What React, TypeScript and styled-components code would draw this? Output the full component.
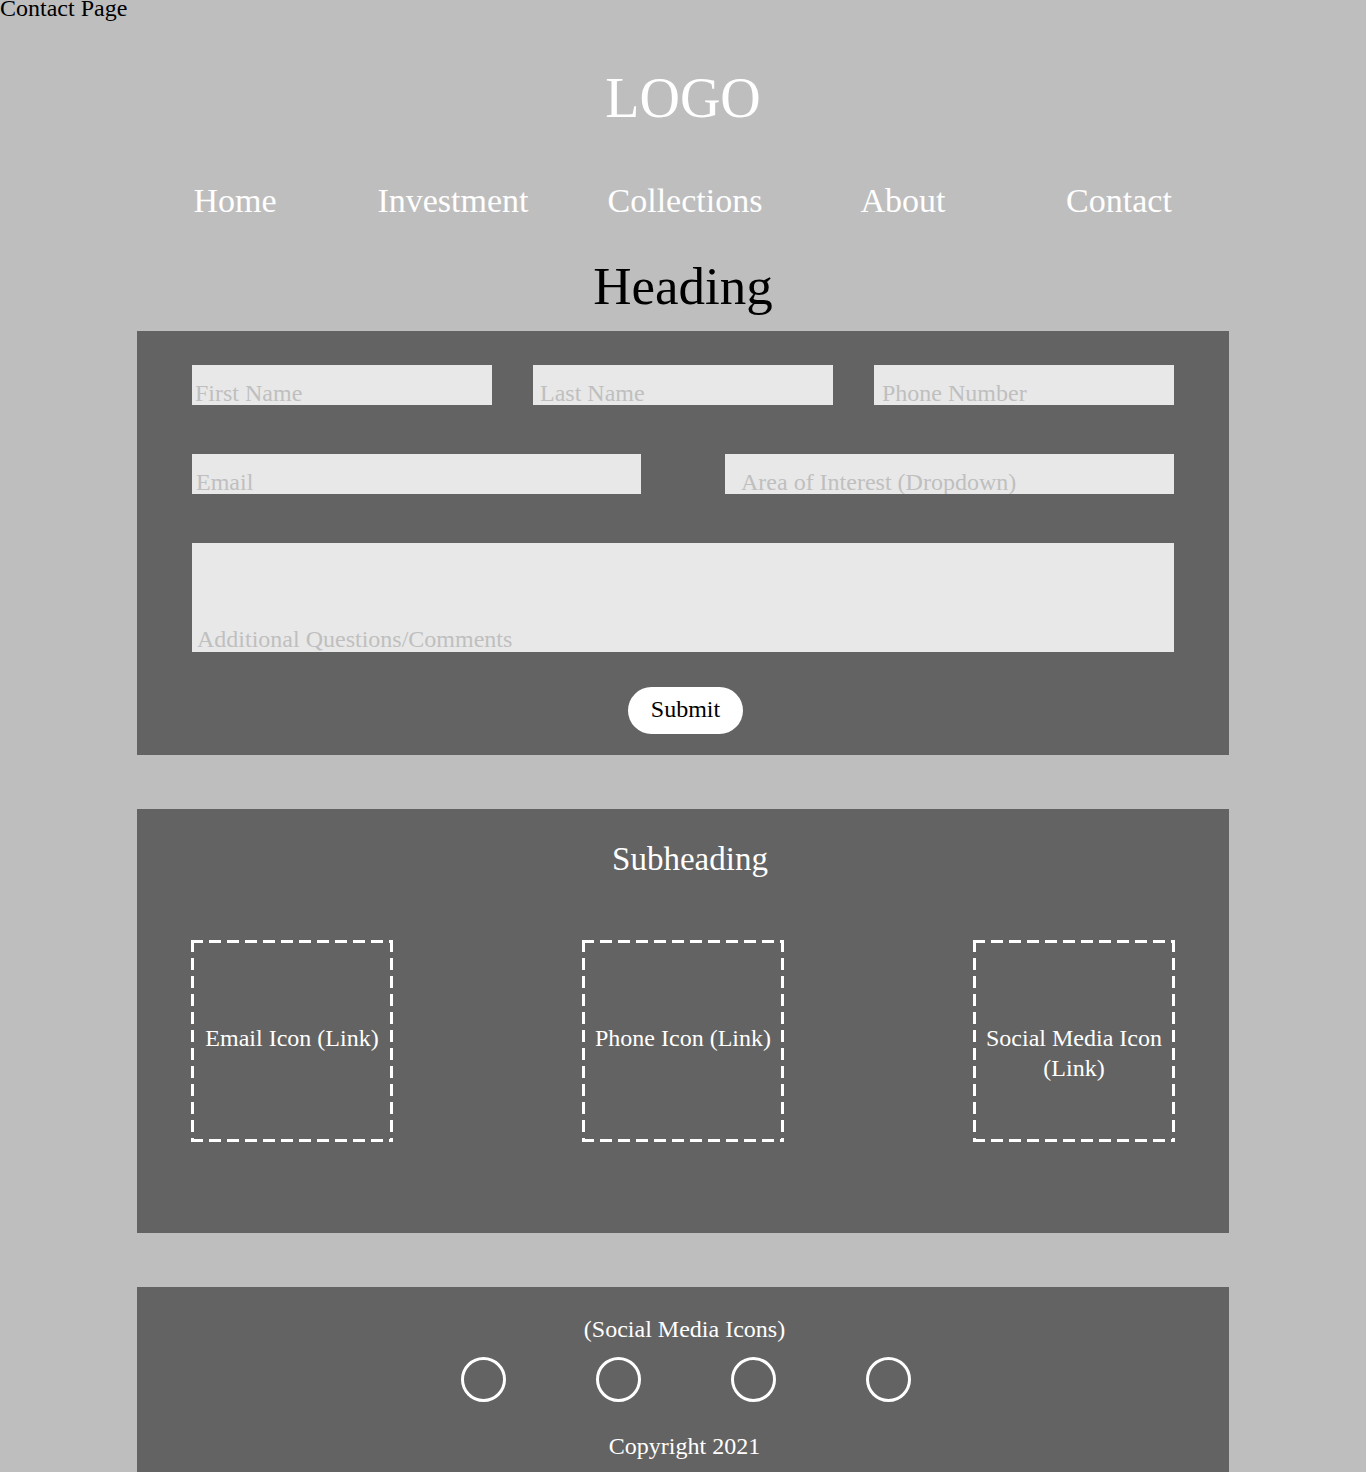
import React from 'react';
import styled, { createGlobalStyle } from 'styled-components';

const serif = `"Liberation Serif", "Times New Roman", serif`;
const panelGrey = '#636363';
const fieldGrey = '#e8e8e8';
const placeholderGrey = '#bfbfbf';

const GlobalStyle = createGlobalStyle`
    html, body {
        margin: 0;
        padding: 0;
        background: #bebebe;
    }
    body {
        font-family: ${serif};
        color: #000;
    }
    * {
        box-sizing: border-box;
    }
`;

const Page = styled.div`
    width: 100%;
    background: #bebebe;
`;

const PageTitle = styled.div`
    font-size: 24px;
    line-height: 16px;
    height: 16px;
    color: #000;
`;

const Container = styled.div`
    width: 1092px;
    margin: 0 auto;
`;

const Logo = styled.div`
    margin-top: 54px;
    font-size: 56px;
    line-height: 56px;
    color: #fff;
    text-align: center;
`;

const Nav = styled.nav`
    margin-top: 55px;
    display: grid;
    grid-template-columns: 196px 240px 224px 212px 220px;
`;

const NavLink = styled.a`
    font-size: 34px;
    line-height: 40px;
    color: #fff;
    text-align: center;
    text-decoration: none;
    cursor: pointer;
`;

const Heading = styled.h1`
    margin: 35px 0 0;
    font-size: 53px;
    line-height: 60px;
    font-weight: normal;
    text-align: center;
    color: #000;
`;

const Panel = styled.section`
    background: ${panelGrey};
    margin-top: ${(props: { mt: string }) => props.mt};
`;

const Form = styled.form`
    padding: 34px 55px 21px;
    display: flex;
    flex-direction: column;
`;

const FieldRow = styled.div`
    display: grid;
    grid-template-columns: ${(props: { cols: number; gap: string }) =>
        `repeat(${props.cols}, 1fr)`};
    column-gap: ${(props: { cols: number; gap: string }) => props.gap};
    margin-bottom: 49px;
`;

const Field = styled.input`
    height: 40px;
    width: 100%;
    border: none;
    outline: none;
    background: ${fieldGrey};
    font-family: ${serif};
    font-size: 24px;
    padding: 16px 0 0 ${(props: { indent?: string }) => props.indent || '4px'};
    color: #333;
    &::placeholder {
        color: ${placeholderGrey};
    }
`;

const Comments = styled.textarea`
    height: 109px;
    width: 100%;
    border: none;
    outline: none;
    resize: none;
    background: ${fieldGrey};
    font-family: ${serif};
    font-size: 24px;
    padding: 83px 0 0 5px;
    color: #333;
    overflow: hidden;
    &::placeholder {
        color: ${placeholderGrey};
    }
`;

const SubmitButton = styled.button`
    align-self: center;
    margin: 35px 0 0 5px;
    width: 115px;
    height: 47px;
    border: none;
    border-radius: 24px;
    background: #fff;
    color: #000;
    font-family: ${serif};
    font-size: 24px;
    padding: 0 0 2px;
    cursor: pointer;
`;

const Subheading = styled.h2`
    margin: 0;
    padding: 30px 0 0 14px;
    font-size: 33px;
    line-height: 40px;
    font-weight: normal;
    color: #fff;
    text-align: center;
`;

const LinkRow = styled.div`
    display: flex;
    justify-content: space-between;
    padding: 61px 54px 91px;
`;

const dashes = (angle: string) =>
    `repeating-linear-gradient(${angle}, #fff 0 12px, transparent 12px 18px)`;

const LinkBox = styled.a`
    width: 202px;
    height: 202px;
    padding: 83px 8px 0;
    background:
        ${dashes('90deg')} top left / 100% 3px no-repeat,
        ${dashes('90deg')} bottom left / 100% 3px no-repeat,
        ${dashes('180deg')} top left / 3px 100% no-repeat,
        ${dashes('180deg')} top right / 3px 100% no-repeat;
    color: #fff;
    font-size: 24px;
    line-height: 30px;
    text-align: center;
    text-decoration: none;
    cursor: pointer;
`;

const Footer = styled.footer`
    background: ${panelGrey};
    margin-top: 54px;
    padding: 28px 0 16px;
    display: flex;
    flex-direction: column;
    align-items: center;
    color: #fff;
`;

const FooterText = styled.div`
    font-size: 24px;
    line-height: 28px;
    margin-top: ${(props: { mt?: string }) => props.mt || '0'};
    padding-left: 3px;
`;

const SocialRow = styled.div`
    display: flex;
    gap: 90px;
    margin-top: 14px;
    padding-left: 5px;
`;

const SocialCircle = styled.a`
    width: 45px;
    height: 45px;
    border: 3px solid #fff;
    border-radius: 50%;
    cursor: pointer;
`;

const navItems = ['Home', 'Investment', 'Collections', 'About', 'Contact'];

const contactLinks = [
    'Email Icon (Link)',
    'Phone Icon (Link)',
    'Social Media Icon (Link)',
];

export default function App() {
    return (
        <Page>
            <GlobalStyle />
            <PageTitle>Contact Page</PageTitle>
            <Container>
                <Logo>LOGO</Logo>
                <Nav>
                    {navItems.map((item) => (
                        <NavLink key={item}>{item}</NavLink>
                    ))}
                </Nav>
                <Heading>Heading</Heading>

                <Panel mt="15px">
                    <Form onSubmit={(e) => e.preventDefault()}>
                        <FieldRow cols={3} gap="41px">
                            <Field placeholder="First Name" indent="3px" />
                            <Field placeholder="Last Name" indent="7px" />
                            <Field placeholder="Phone Number" indent="8px" />
                        </FieldRow>
                        <FieldRow cols={2} gap="84px">
                            <Field placeholder="Email" indent="4px" />
                            <Field
                                placeholder="Area of Interest (Dropdown)"
                                indent="16px"
                            />
                        </FieldRow>
                        <Comments placeholder="Additional Questions/Comments" />
                        <SubmitButton type="submit">Submit</SubmitButton>
                    </Form>
                </Panel>

                <Panel mt="54px">
                    <Subheading>Subheading</Subheading>
                    <LinkRow>
                        {contactLinks.map((label) => (
                            <LinkBox key={label}>{label}</LinkBox>
                        ))}
                    </LinkRow>
                </Panel>

                <Footer>
                    <FooterText>(Social Media Icons)</FooterText>
                    <SocialRow>
                        {[0, 1, 2, 3].map((i) => (
                            <SocialCircle key={i} />
                        ))}
                    </SocialRow>
                    <FooterText mt="30px">Copyright 2021</FooterText>
                </Footer>
            </Container>
        </Page>
    );
}
